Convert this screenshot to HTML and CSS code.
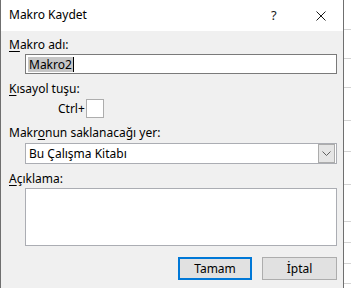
FILE: index.html
```html
<!DOCTYPE html>
<html lang="tr">
<head>
  <meta charset="UTF-8">
  <title>Makro Kaydet</title>
  <link rel="stylesheet" href="styles.css">
</head>
<body>
  <div class="screen">
    <div class="dialog">
      <div class="titlebar">
        <span class="title">Makro Kaydet</span>
        <span class="help">?</span>
        <svg class="close" width="10" height="10" viewBox="0 0 10 10">
          <path d="M0.5 0.5 L9.5 9.5 M9.5 0.5 L0.5 9.5" stroke="#1a1a1a" stroke-width="1" fill="none"/>
        </svg>
      </div>

      <div class="content">
        <label class="label"><u>M</u>akro adı:</label>
        <div class="field name-field"><span class="selected">Makro2</span><span class="caret"></span></div>

        <label class="label gap"><u>K</u>ısayol tuşu:</label>
        <div class="shortcut">
          <span>Ctrl+</span>
          <span class="keybox"></span>
        </div>

        <label class="label gap">Makr<u>o</u>nun saklanacağı yer:</label>
        <div class="field combo">
          <span class="combo-text">Bu Çalışma Kitabı</span>
          <span class="drop">
            <svg width="9" height="5" viewBox="0 0 9 5">
              <path d="M0.5 0.5 L4.5 4.5 L8.5 0.5" stroke="#5f5f5f" stroke-width="1" fill="none"/>
            </svg>
          </span>
        </div>

        <label class="label gap"><u>A</u>çıklama:</label>
        <div class="memo"></div>

        <div class="actions">
          <button class="btn primary">Tamam</button>
          <button class="btn">İptal</button>
        </div>
      </div>
    </div>

    <!-- worksheet behind the dialog -->
    <div class="sheet">
      <div class="row" style="height: 30px"></div>
      <div class="row" style="height: 29px"></div>
      <div class="row" style="height: 29px"></div>
      <div class="row" style="height: 33px"></div>
      <div class="row" style="height: 31px"></div>
      <div class="row" style="height: 33px"></div>
      <div class="row" style="height: 37px"></div>
      <div class="row" style="height: 21px"></div>
      <div class="row" style="height: 21px"></div>
      <div class="row" style="height: 20px"></div>
    </div>
  </div>
</body>
</html>
```

FILE: styles.css
```css
body {
  margin: 0;
  font-family: "Noto Sans", "Open Sans", sans-serif;
  font-size: 12px;
  color: #000;
  background: #ffffff;
}

.screen {
  display: flex;
  width: 351px;
  height: 288px;
  overflow: hidden;
}

.dialog {
  width: 342px;
  height: 288px;
  border-left: 1px solid #6f6f6f;
  border-right: 1px solid #6f6f6f;
  background: #f0f0f0;
  flex-shrink: 0;
}

.titlebar {
  height: 31px;
  background: #ffffff;
  display: flex;
  align-items: center;
  padding-left: 8px;
}

.title {
  flex: 1;
  line-height: 16px;
  padding-bottom: 1px;
}

.help {
  width: 45px;
  font-size: 13px;
  line-height: 16px;
  padding-bottom: 1px;
  color: #1a1a1a;
}

.close {
  margin-right: 17px;
}

.content {
  padding: 6px 0 0 8px;
}

.label {
  display: block;
  line-height: 16px;
}

.label u {
  text-underline-offset: 2px;
}

.gap {
  margin-top: 7px;
}

.field {
  margin: 1px 0 0 16px;
  width: 310px;
  height: 18px;
  border: 1px solid #7a7a7a;
  background: #ffffff;
  display: flex;
  align-items: center;
}

.name-field {
  padding-left: 2px;
  width: 308px;
}

.selected {
  background: #c6c6c6;
  line-height: 15px;
  padding: 0 1px;
}

.caret {
  width: 1px;
  height: 15px;
  background: #000;
}

.shortcut {
  display: flex;
  align-items: center;
  margin: 2px 0 0 49px;
  gap: 1px;
}

.keybox {
  width: 16px;
  height: 17px;
  border: 1px solid #adadad;
  background: #ffffff;
}

.combo {
  margin-top: 2px;
  height: 19px;
  border-color: #abadb3;
}

.combo-text {
  flex: 1;
  padding-left: 3px;
}

.drop {
  width: 15px;
  height: 17px;
  margin-right: 1px;
  border: 1px solid #acacac;
  background: #e5e5e5;
  display: flex;
  align-items: center;
  justify-content: center;
}

.memo {
  margin: 1px 0 0 16px;
  width: 310px;
  height: 56px;
  border: 1px solid #abadb3;
  background: #ffffff;
}

.actions {
  display: flex;
  justify-content: flex-end;
  gap: 10px;
  width: 328px;
  margin-top: 11px;
}

.btn {
  font-family: inherit;
  font-size: 12px;
  width: 75px;
  height: 23px;
  padding: 0;
  border: 1px solid #adadad;
  background: #e1e1e1;
  color: #000;
}

.btn.primary {
  width: 74px;
  border: 2px solid #0078d7;
}

.sheet {
  flex: 1;
  display: flex;
  flex-direction: column;
}

.row {
  border-bottom: 1px solid #d4d4d4;
  box-sizing: border-box;
}
```
